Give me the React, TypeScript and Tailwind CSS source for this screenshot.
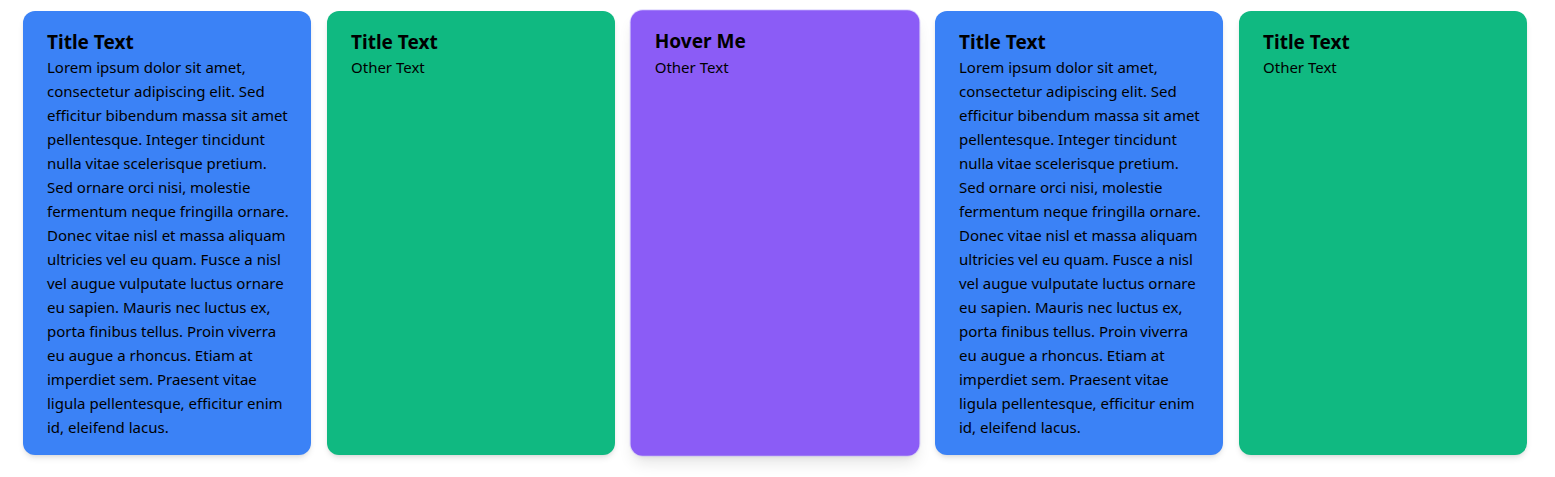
import React from 'react';

const lorem = [
  'Lorem ipsum dolor sit amet,',
  'consectetur adipiscing elit. Sed',
  'efficitur bibendum massa sit amet',
  'pellentesque. Integer tincidunt',
  'nulla vitae scelerisque pretium.',
  'Sed ornare orci nisi, molestie',
  'fermentum neque fringilla ornare.',
  'Donec vitae nisl et massa aliquam',
  'ultricies vel eu quam. Fusce a nisl',
  'vel augue vulputate luctus ornare',
  'eu sapien. Mauris nec luctus ex,',
  'porta finibus tellus. Proin viverra',
  'eu augue a rhoncus. Etiam at',
  'imperdiet sem. Praesent vitae',
  'ligula pellentesque, efficitur enim',
  'id, eleifend lacus.',
];

type CardProps = {
  title: string;
  color: string;
  long?: boolean;
  hovered?: boolean;
};

function Card({ title, color, long, hovered }: CardProps) {
  return (
    <div
      className={
        'w-72 shrink-0 rounded-xl px-6 py-4 text-black ' +
        color +
        (hovered ? ' scale-[1.003] shadow-lg ring-1 ring-[#c4b5fd]/50' : ' shadow-md')
      }
    >
      <h2 className="pt-0.5 text-[19px] leading-[26px] font-bold">{title}</h2>
      {long ? (
        <p className="text-[15px] leading-6">
          {lorem.map((line, i) => (
            <span key={i} className="block whitespace-nowrap">
              {line}
            </span>
          ))}
        </p>
      ) : (
        <p className="text-[15px] leading-6">Other Text</p>
      )}
    </div>
  );
}

export default function App() {
  return (
    <div
      className="min-h-[477px] bg-white"
      style={{ fontFamily: '"Noto Sans", "Open Sans", sans-serif' }}
    >
      <div className="flex items-stretch gap-4 pl-[23px] pt-[11px]">
        <Card title="Title Text" color="bg-[#3b82f6]" long />
        <Card title="Title Text" color="bg-[#10b981]" />
        <Card title="Hover Me" color="bg-[#8b5cf6]" hovered />
        <Card title="Title Text" color="bg-[#3b82f6]" long />
        <Card title="Title Text" color="bg-[#10b981]" />
      </div>
    </div>
  );
}
